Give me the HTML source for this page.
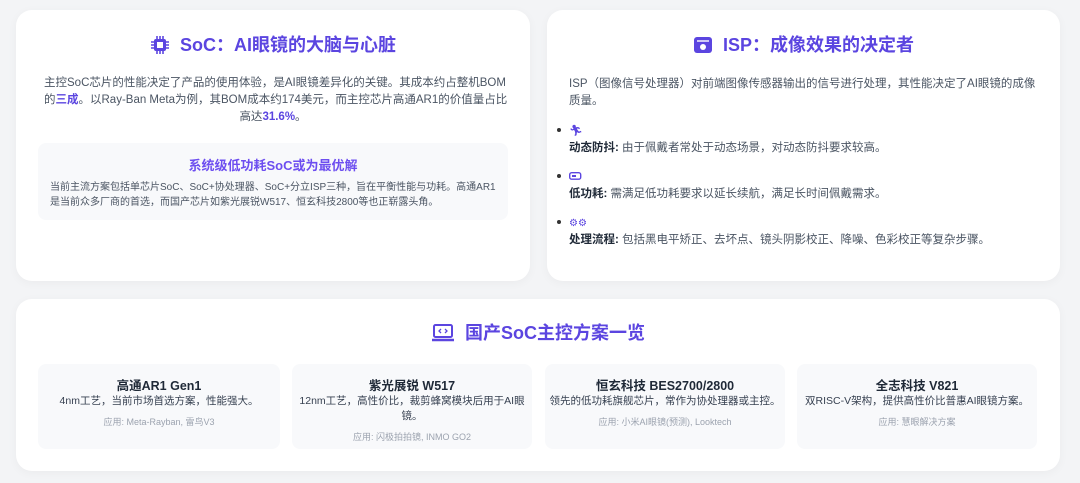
<!DOCTYPE html>
<html><head><meta charset="utf-8"><style>
*{margin:0;padding:0;box-sizing:border-box}
body{width:1080px;height:483px;background:#f3f4f6;font-family:"Liberation Sans","Noto Sans CJK SC",sans-serif;position:relative;overflow:hidden;color:#4b5563}
.card{position:absolute;background:#fff;border-radius:16px;box-shadow:0 2px 10px rgba(0,0,0,.04)}
h2{color:#5b45e0;font-size:18px;line-height:24px;font-weight:700;display:flex;align-items:center;justify-content:center;gap:10px;position:absolute;left:0;right:0}
.p{position:absolute;font-size:11.5px;line-height:17px;color:#4b5563;white-space:nowrap}
.hl{color:#5b45e0;font-weight:700}
.sub{position:absolute;background:#f8f9fb;border-radius:8px;text-align:center}
.sub b{display:block;font-size:12.5px;color:#1f2937;margin-top:11px}
.sub .d{font-size:10.5px;line-height:15px;color:#374151;padding:0 3px}
.sub .a{font-size:9px;color:#9ca3af;margin-top:6px}
li{list-style:none;position:relative;font-size:11.5px;line-height:17px;white-space:nowrap}
li:before{content:"";position:absolute;left:-12px;top:5px;width:4px;height:4px;border-radius:2px;background:#333}
li strong{color:#1f2937}
</style></head><body>
<div class="card" style="left:16px;top:10px;width:514px;height:271px">
<h2 style="top:23px"><svg width="20" height="20" viewBox="0 0 20 20"><rect x="4" y="4" width="12" height="12" rx="2" fill="#5b45e0"/><rect x="7" y="7" width="6" height="6" fill="#fff"/><g stroke="#5b45e0" stroke-width="1.6"><path d="M7 1v3M10 1v3M13 1v3M7 16v3M10 16v3M13 16v3M1 7h3M1 10h3M1 13h3M16 7h3M16 10h3M16 13h3"/></g></svg>SoC：AI眼镜的大脑与心脏</h2>
<div class="p" style="left:28px;top:65px;width:458px;text-align:center">主控SoC芯片的性能决定了产品的使用体验，是AI眼镜差异化的关键。其成本约占整机BOM<br><div style="text-align:left">的<span class="hl">三成</span>。以Ray-Ban Meta为例，其BOM成本约174美元，而主控芯片高通AR1的价值量占比</div>高达<span class="hl">31.6%</span>。</div>
<div class="sub" style="left:22px;top:133px;width:470px;height:77px">
<div style="color:#6d4ef0;font-weight:700;font-size:13px;margin-top:12px">系统级低功耗SoC或为最优解</div>
<div style="font-size:10px;line-height:15px;color:#4b5563;text-align:left;padding:0 12px;margin-top:6px;white-space:nowrap">当前主流方案包括单芯片SoC、SoC+协处理器、SoC+分立ISP三种，旨在平衡性能与功耗。高通AR1<br>是当前众多厂商的首选，而国产芯片如紫光展锐W517、恒玄科技2800等也正崭露头角。</div></div>
</div>
<div class="card" style="left:547px;top:10px;width:513px;height:271px">
<h2 style="top:23px"><svg width="20" height="20" viewBox="0 0 20 20"><rect x="1" y="2" width="18" height="16" rx="3" fill="#5b45e0"/><path d="M4 6h12" stroke="#fff" stroke-width="1.4"/><circle cx="10" cy="12" r="3" fill="#fff"/></svg>ISP：成像效果的决定者</h2>
<div class="p" style="left:22px;top:66px;width:470px">ISP（图像信号处理器）对前端图像传感器输出的信号进行处理，其性能决定了AI眼镜的成像<br>质量。</div>
<ul style="position:absolute;left:22px;top:113px;color:#4b5563">
<li><span style="color:#5b45e0;font-size:11px">🏃&#xFE0E;</span><br><strong>动态防抖:</strong> 由于佩戴者常处于动态场景，对动态防抖要求较高。</li>
<li style="margin-top:12px"><svg width="13" height="8"><rect x=".7" y=".7" width="11" height="6.5" rx="2" fill="none" stroke="#5b45e0" stroke-width="1.4"/><rect x="3" y="3" width="4" height="2" fill="#5b45e0"/></svg><br><strong>低功耗:</strong> 需满足低功耗要求以延长续航，满足长时间佩戴需求。</li>
<li style="margin-top:12px"><span style="color:#5b45e0;font-size:10px">⚙⚙</span><br><strong>处理流程:</strong> 包括黑电平矫正、去坏点、镜头阴影校正、降噪、色彩校正等复杂步骤。</li>
</ul></div>
<div class="card" style="left:16px;top:299px;width:1044px;height:172px">
<h2 style="top:22px"><svg width="24" height="20" viewBox="0 0 24 20"><rect x="3" y="2" width="18" height="12" rx="1.5" fill="none" stroke="#5b45e0" stroke-width="2"/><path d="M1 17h22" stroke="#5b45e0" stroke-width="2.5"/><path d="M10 6l-2 2 2 2M14 6l2 2-2 2" stroke="#5b45e0" stroke-width="1.3" fill="none"/></svg>国产SoC主控方案一览</h2>
<div class="sub" style="left:22px;top:65px;width:242px;height:85px"><b>高通AR1 Gen1</b><div class="d">4nm工艺，当前市场首选方案，性能强大。</div><div class="a">应用: Meta-Rayban, 雷鸟V3</div></div>
<div class="sub" style="left:276px;top:65px;width:240px;height:85px"><b>紫光展锐 W517</b><div class="d">12nm工艺，高性价比，裁剪蜂窝模块后用于AI眼<br>镜。</div><div class="a">应用: 闪极拍拍镜, INMO GO2</div></div>
<div class="sub" style="left:529px;top:65px;width:240px;height:85px"><b>恒玄科技 BES2700/2800</b><div class="d">领先的低功耗旗舰芯片，常作为协处理器或主控。</div><div class="a">应用: 小米AI眼镜(预测), Looktech</div></div>
<div class="sub" style="left:781px;top:65px;width:240px;height:85px"><b>全志科技 V821</b><div class="d">双RISC-V架构，提供高性价比普惠AI眼镜方案。</div><div class="a">应用: 慧眼解决方案</div></div>
</div>
</body></html>
